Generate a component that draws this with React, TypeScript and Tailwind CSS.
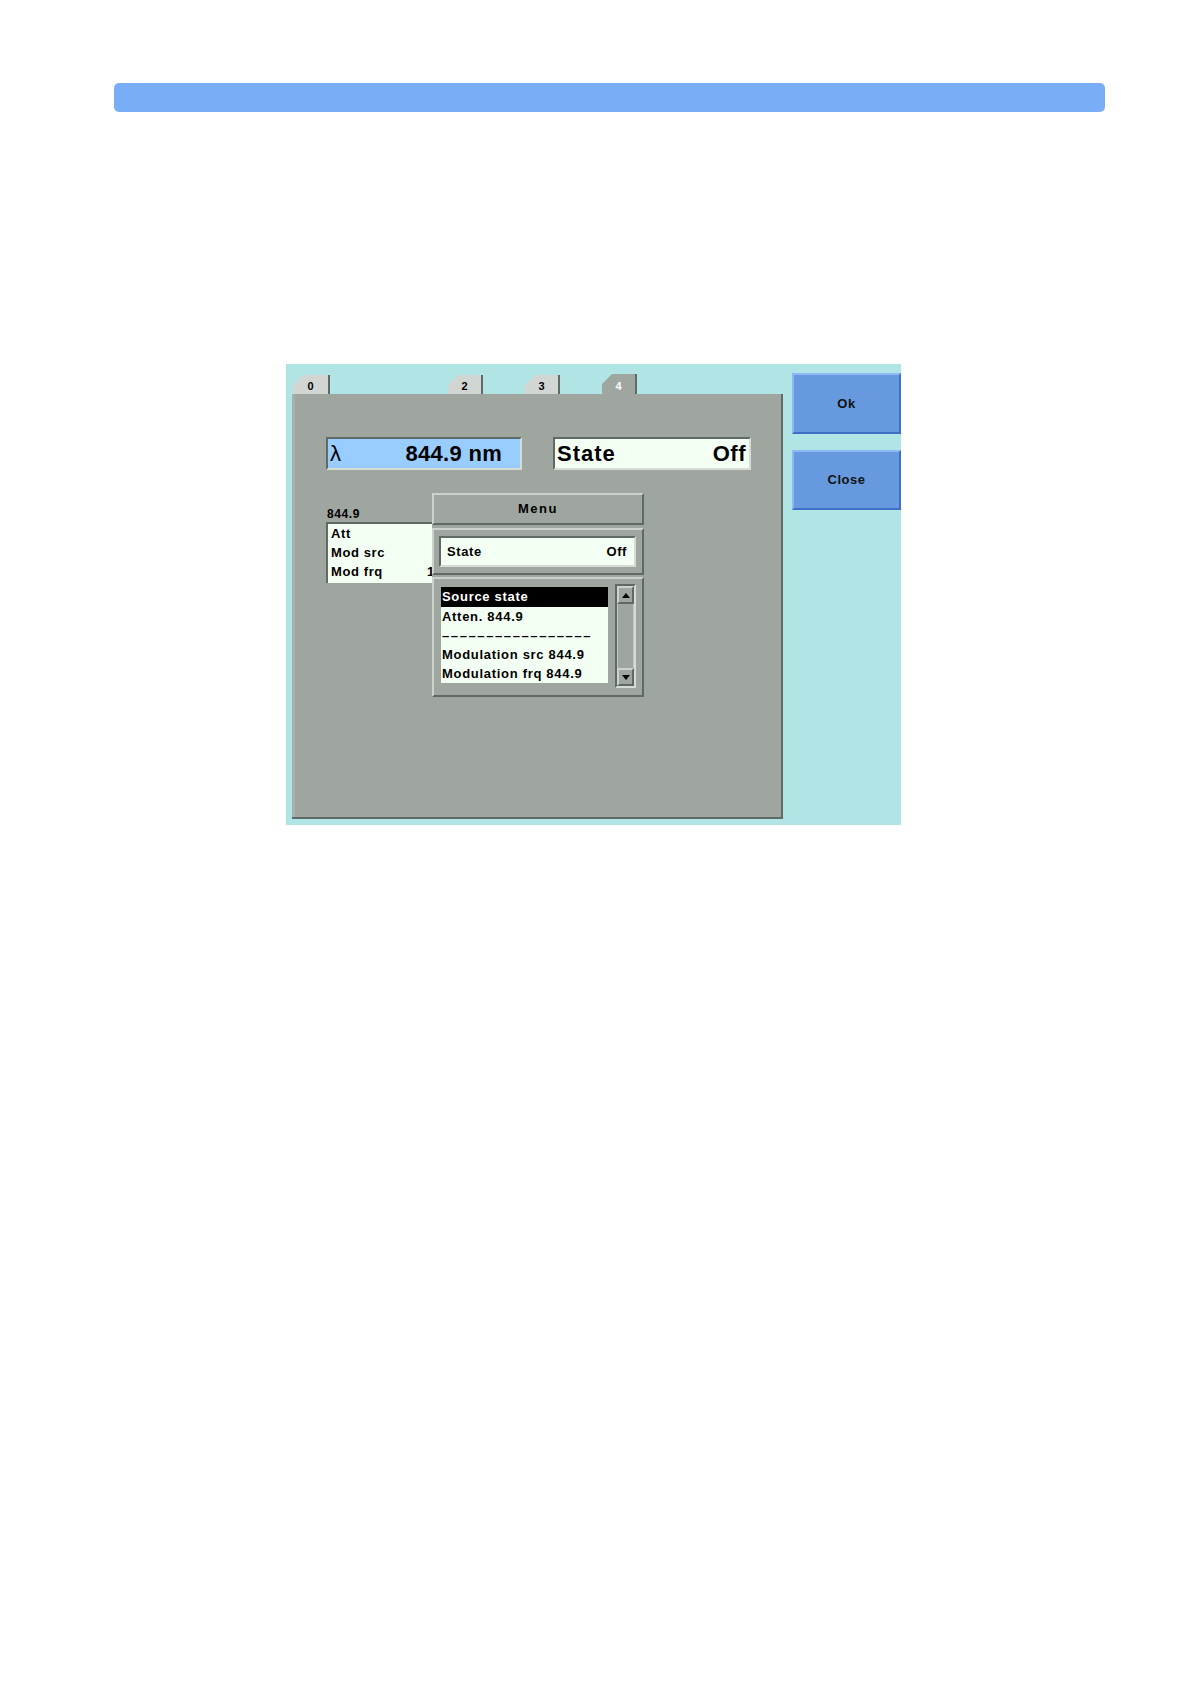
import React from "react";

const raised =
  "border-2 border-t-[#cdd2cd] border-l-[#cdd2cd] border-b-[#5f6a66] border-r-[#5f6a66]";
const inset =
  "border-2 border-t-[#5f6a66] border-l-[#5f6a66] border-b-[#d6dbd6] border-r-[#d6dbd6]";

function Tab({ label, active = false, className = "" }: { label: string; active?: boolean; className?: string }) {
  return (
    <div
      className={`${className} flex w-[35px] shrink-0 items-end justify-center border-r-2 border-r-[#5f6a66] pb-[1px] text-[11px] font-bold leading-[14px] [clip-path:polygon(10px_0,100%_0,100%_100%,0_100%,0_10px)] ${
        active ? "h-[20px] bg-[#9ea69f] text-white" : "h-[19px] bg-[#d2d6d2] text-black"
      }`}
    >
      {label}
    </div>
  );
}

function Arrow({ down = false }: { down?: boolean }) {
  return (
    <svg width="8" height="5" viewBox="0 0 8 5">
      <path d={down ? "M0 0H8L4 5Z" : "M0 5H8L4 0Z"} fill="#000" />
    </svg>
  );
}

const menuRows = [
  "Source state",
  "Atten. 844.9",
  "–––––––––––––––––",
  "Modulation src 844.9",
  "Modulation frq 844.9",
];

export default function App() {
  return (
    <div className="min-h-[1682px] bg-white font-['Liberation_Sans',Arial,sans-serif] text-black">
      <div className="pl-[114px] pt-[83px]">
        <div className="h-[29px] w-[991px] rounded-[5px] bg-[#79adf6]" />
      </div>

      <div className="ml-[286px] mt-[252px] flex h-[461px] w-[615px] bg-[#b1e4e4]">
        {/* tabs + panel */}
        <div className="flex w-[497px] flex-col pl-[6px]">
          <div className="flex h-[30px] items-end">
            <Tab label="0" className="ml-[1px] w-[37px]" />
            <Tab label="2" className="ml-[118px]" />
            <Tab label="3" className="ml-[42px]" />
            <Tab label="4" active className="ml-[42px]" />
          </div>

          <div className="relative h-[425px] w-[491px] border-b-2 border-r-2 border-b-[#5f6a66] border-r-[#5f6a66] bg-[#9ea69f] pl-[34px] pt-[43px] shadow-[inset_3px_0_0_#a9afaa]">
            <div className="flex gap-[31px]">
              <div className={`${inset} flex h-[33px] w-[196px] items-center justify-between bg-[#99ccff] pl-[2px] pr-[18px] text-[22px] leading-none`}>
                <span className="font-normal">λ</span>
                <span className="font-bold tracking-[0.3px]">844.9 nm</span>
              </div>
              <div className={`${inset} flex h-[33px] w-[198px] items-center justify-between bg-[#f4fff4] pl-[2px] pr-[3px] text-[22px] font-bold leading-none`}>
                <span className="tracking-[1px]">State</span>
                <span className="tracking-[0.5px]">Off</span>
              </div>
            </div>

            <div className="mt-[37px] h-[15px] pl-[1px] text-[12px] font-bold leading-[15px] tracking-[0.6px]">844.9</div>
            <div className="h-[61px] w-[150px] border-l-2 border-t-2 border-l-[#5f6a66] border-t-[#5f6a66] bg-[#f4fff4] pl-[3px] text-[13px] font-bold tracking-[0.6px]">
              <div className="h-[19px] leading-[19px]">Att</div>
              <div className="h-[19px] leading-[19px]">Mod src</div>
              <div className="flex h-[19px] leading-[19px]">
                <span className="w-[96px]">Mod frq</span>
                <span>1</span>
              </div>
            </div>

            {/* popup menu */}
            <div className="absolute left-[140px] top-[99px] flex w-[212px] flex-col bg-[#9ea69f] text-[13px] font-bold">
              <div className={`${raised} flex h-[32px] items-center justify-center tracking-[1.5px]`}>Menu</div>

              <div className={`${raised} mt-[3px] h-[47px] py-[6px] pl-[5px] pr-[6px]`}>
                <div className={`${inset} flex h-[31px] items-center justify-between bg-[#f4fff4] pl-[6px] pr-[7px] tracking-[0.6px]`}>
                  <span>State</span>
                  <span>Off</span>
                </div>
              </div>

              <div className={`${raised} mt-[2px] flex h-[120px] pl-[7px]`}>
                <div className="mt-[8px] flex h-[96px] w-[167px] flex-col bg-[#f4fff4] tracking-[0.7px]">
                  {menuRows.map((row, i) => (
                    <div
                      key={row}
                      className={`h-[19px] overflow-hidden whitespace-nowrap pl-[1px] leading-[19px] ${
                        i === 0 ? "h-[20px] bg-black text-white" : ""
                      } ${i === 2 ? "tracking-[1.6px]" : ""}`}
                    >
                      {row}
                    </div>
                  ))}
                </div>

                <div className={`${inset} ml-[7px] mt-[5px] flex h-[104px] w-[21px] flex-col`}>
                  <div className={`${raised} flex h-[18px] items-center justify-center`}>
                    <Arrow />
                  </div>
                  <div className="flex-1 border-x border-x-[#c2c8c2]" />
                  <div className={`${raised} flex h-[18px] items-center justify-center`}>
                    <Arrow down />
                  </div>
                </div>
              </div>
            </div>
          </div>
        </div>

        {/* side buttons */}
        <div className="ml-[9px] flex w-[109px] flex-col gap-[16px] pt-[9px]">
          <div className="flex h-[61px] items-center justify-center border-2 border-t-[#8dbaf5] border-l-[#8dbaf5] border-b-[#3f6fc6] border-r-[#3f6fc6] bg-[#6699dd] text-[13px] font-bold tracking-[0.5px] text-[#111]">
            Ok
          </div>
          <div className="flex h-[60px] items-center justify-center border-2 border-t-[#8dbaf5] border-l-[#8dbaf5] border-b-[#3f6fc6] border-r-[#3f6fc6] bg-[#6699dd] text-[13px] font-bold tracking-[0.5px] text-[#111]">
            Close
          </div>
        </div>
      </div>
    </div>
  );
}
